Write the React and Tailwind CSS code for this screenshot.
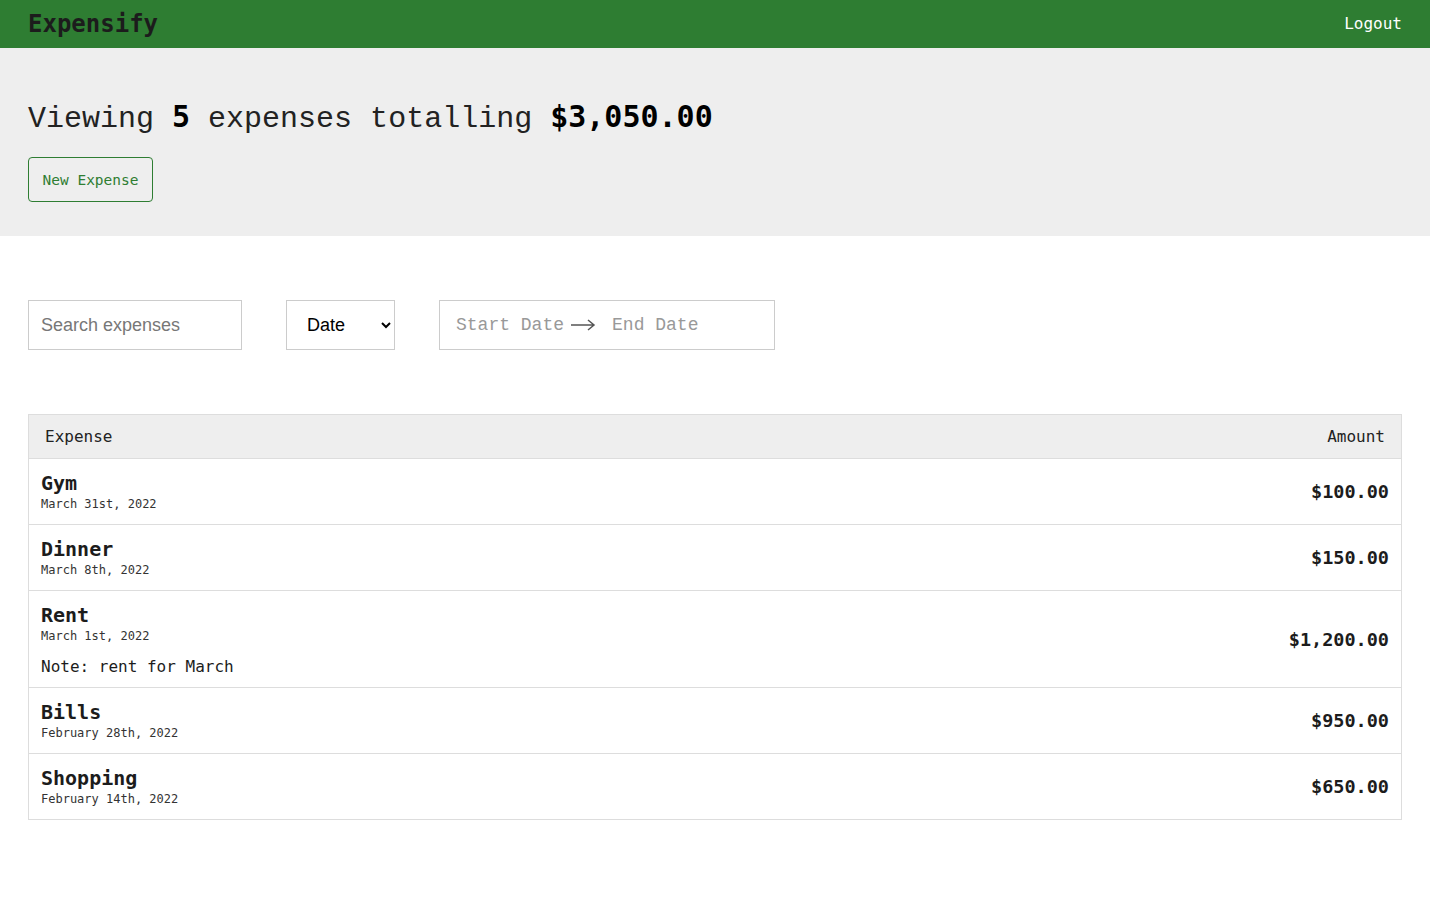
const expenses = [
  { name: "Gym", date: "March 31st, 2022", amount: "$100.00" },
  { name: "Dinner", date: "March 8th, 2022", amount: "$150.00" },
  { name: "Rent", date: "March 1st, 2022", amount: "$1,200.00", note: "rent for March" },
  { name: "Bills", date: "February 28th, 2022", amount: "$950.00" },
  { name: "Shopping", date: "February 14th, 2022", amount: "$650.00" },
];

const mono = "font-['DejaVu_Sans_Mono','Liberation_Mono',monospace]";
const thin = "font-['Liberation_Mono','DejaVu_Sans_Mono',monospace]";

export default function App() {
  return (
    <div className={`min-h-screen bg-white text-[#1c1c1c] ${mono}`}>
      {/* Top bar */}
      <header className="h-12 bg-[#2e7d32] flex items-center justify-between px-7">
        <h1 className="text-2xl font-bold text-[#1c1c1c] leading-none">Expensify</h1>
        <button className="text-base text-white leading-none">Logout</button>
      </header>

      {/* Summary */}
      <section className="bg-[#eeeeee] px-7 pt-[51px] pb-[34px]">
        <h2 className={`h-[36px] text-[30px] leading-[36px] font-light text-[#222] ${thin}`}>
          Viewing <span className={`font-bold text-black ${mono}`}>5</span> expenses totalling{" "}
          <span className={`font-bold text-black ${mono}`}>$3,050.00</span>
        </h2>
        <button className="mt-[22px] w-[125px] h-[45px] pt-[2px] border border-[#2e7d32] rounded text-[#2e7d32] text-[14.5px] bg-transparent">
          New Expense
        </button>
      </section>

      {/* Filters */}
      <div className="px-7 mt-16 flex items-center gap-[44px]">
        <input
          type="text"
          placeholder="Search expenses"
          className="w-[214px] h-[50px] border border-[#cccccc] px-3 text-[18px] font-['Liberation_Sans',Arial,sans-serif] placeholder:text-[#777] outline-none"
        />
        <select className="w-[109px] h-[50px] border border-[#cccccc] bg-white pl-4 pr-2 text-[18px] font-['Liberation_Sans',Arial,sans-serif] text-black">
          <option>Date</option>
          <option>Amount</option>
        </select>
        <div className={`w-[336px] h-[50px] border border-[#cccccc] flex items-center pl-4 text-[18px] text-[#999] font-light ${thin}`}>
          <span>Start Date</span>
          <svg className="mx-[6px]" width="26" height="12" viewBox="0 0 26 12" fill="none" stroke="#555" strokeWidth="1.5">
            <path d="M1 6h23M18 1l6 5-6 5" />
          </svg>
          <span className="ml-[10px]">End Date</span>
        </div>
      </div>

      {/* List */}
      <div className="mx-7 mt-16 border border-[#dddddd]">
        <div className="bg-[#eeeeee] border-b border-[#dddddd] flex justify-between px-4 py-3 text-base leading-[1.2] text-[#222]">
          <span>Expense</span>
          <span>Amount</span>
        </div>
        {expenses.map((e, i) => (
          <div
            key={e.name}
            className={`flex items-center justify-between px-3 pt-3 pb-[11px] ${i < expenses.length - 1 ? "border-b border-[#dddddd]" : ""}`}
          >
            <div>
              <div className="text-xl font-bold leading-[24px]">{e.name}</div>
              <div className="text-xs leading-[18px] text-[#333]">{e.date}</div>
              {e.note && <div className="mt-3 text-base leading-[19px]">Note: {e.note}</div>}
            </div>
            <div className="text-[18.5px] font-bold">{e.amount}</div>
          </div>
        ))}
      </div>
    </div>
  );
}
